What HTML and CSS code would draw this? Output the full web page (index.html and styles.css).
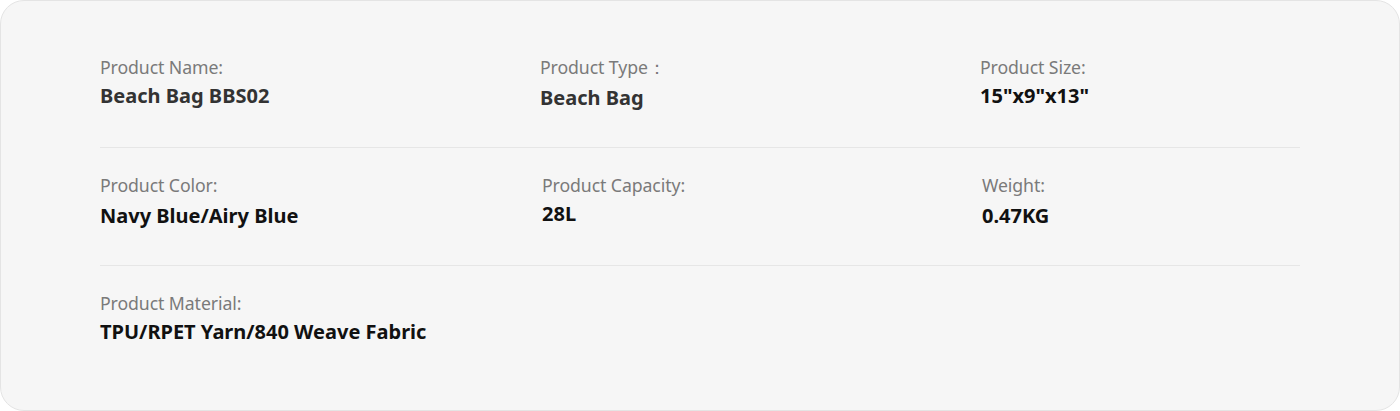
FILE: index.html
```html
<!DOCTYPE html>
<html lang="en">
<head>
<meta charset="utf-8">
<title>Product Specs</title>
<link rel="stylesheet" href="styles.css">
</head>
<body>
<section class="card">
  <div class="row">
    <div class="cell"><div class="label">Product Name:</div><div class="value dim">Beach Bag BBS02</div></div>
    <div class="cell"><div class="label">Product Type：</div><div class="value dim lower">Beach Bag</div></div>
    <div class="cell"><div class="label">Product Size:</div><div class="value">15"x9"x13"</div></div>
  </div>
  <div class="row">
    <div class="cell"><div class="label">Product Color:</div><div class="value lower">Navy Blue/Airy Blue</div></div>
    <div class="cell shift"><div class="label">Product Capacity:</div><div class="value">28L</div></div>
    <div class="cell shift"><div class="label">Weight:</div><div class="value lower">0.47KG</div></div>
  </div>
  <div class="row last">
    <div class="cell"><div class="label">Product Material:</div><div class="value">TPU/RPET Yarn/840 Weave Fabric</div></div>
  </div>
</section>
</body>
</html>
```
FILE: styles.css
```css
html, body {
  margin: 0;
  padding: 0;
  background: #ffffff;
}
body {
  font-family: "Noto Sans", "Open Sans", sans-serif;
}
.card {
  box-sizing: border-box;
  width: 1400px;
  height: 411px;
  background: #f6f6f6;
  border: 1px solid #e4e4e4;
  border-radius: 24px;
  padding: 54px 99px 0 99px;
}
.row {
  display: grid;
  grid-template-columns: 440px 440px 1fr;
  border-bottom: 1px solid #e6e6e6;
  padding-bottom: 35px;
  margin-bottom: 25px;
}
.row.last {
  border-bottom: none;
}
.cell {
  display: flex;
  flex-direction: column;
  gap: 3px;
}
.cell.shift {
  padding-left: 2px;
}
.label {
  font-size: 17.7px;
  line-height: 24px;
  color: #7a7a7a;
  letter-spacing: -0.1px;
}
.value {
  font-size: 20px;
  line-height: 28px;
  font-weight: 700;
  color: #111111;
}
.value.dim {
  color: #333333;
}
.value.lower {
  margin-top: 2px;
}
```
